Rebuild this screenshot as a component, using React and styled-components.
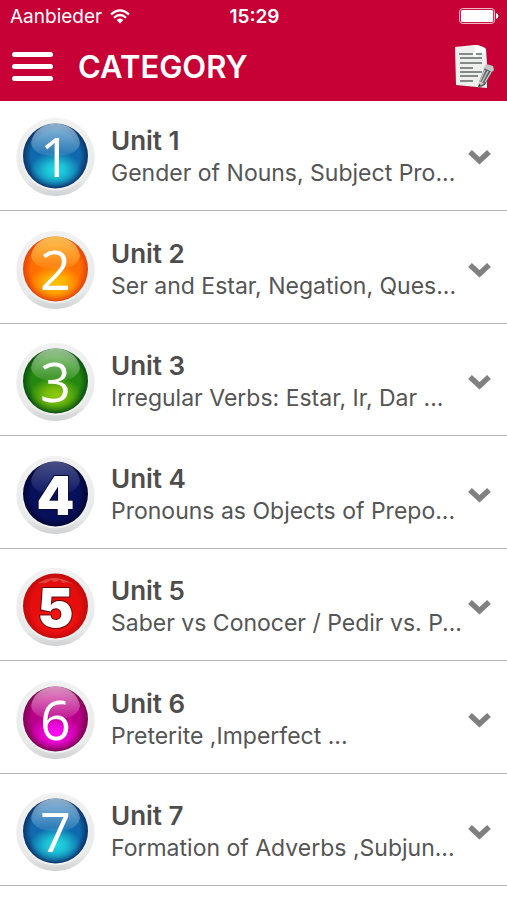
import React from "react";
import styled, { createGlobalStyle } from "styled-components";

const GlobalStyle = createGlobalStyle`
  * {
    box-sizing: border-box;
  }
  body {
    margin: 0;
    background: #fff;
    font-family: Inter, "Liberation Sans", sans-serif;
  }
  button {
    padding: 0;
    border: 0;
    background: none;
    font: inherit;
    cursor: pointer;
  }
  svg {
    display: block;
  }
`;

const Header = styled.header`
  background: #c70036;
  color: #fff;
`;

const StatusBar = styled.div`
  display: grid;
  grid-template-columns: 1fr auto 1fr;
  align-items: center;
  height: 32px;
  padding: 0 8px 0 10px;
  font-size: 19px;
`;

const Carrier = styled.div`
  display: flex;
  align-items: center;
  gap: 8px;
`;

const Clock = styled.time`
  font-weight: 600;
`;

const Battery = styled.div`
  justify-self: end;
`;

const Toolbar = styled.div`
  display: flex;
  align-items: center;
  height: 69px;
  padding: 0 12px;
`;

const MenuButton = styled.button`
  display: flex;
  flex-direction: column;
  gap: 7px;
  width: 41px;
`;

const MenuLine = styled.span`
  height: 5px;
  border-radius: 3px;
  background: #fff;
`;

const Title = styled.h1`
  flex: 1;
  margin: 0 0 0 25px;
  font-size: 31px;
  line-height: 40px;
  font-weight: 600;
`;

const List = styled.ul`
  margin: 0;
  padding: 0;
  list-style: none;
`;

const Item = styled.li`
  height: 112px;
  border-bottom: 1px solid #b4b4b4;
  &:nth-child(even) {
    height: 113px;
  }
  &:first-child {
    height: 110px;
  }
`;

const Row = styled.button`
  display: flex;
  align-items: flex-end;
  width: 100%;
  height: 100%;
  padding: 0 15px 13px 16px;
  text-align: left;
`;

const RowText = styled.span`
  flex: 1;
  min-width: 0;
  margin: 0 0 8px 16px;
`;

const UnitName = styled.span`
  display: block;
  font-size: 26px;
  line-height: 32px;
  font-weight: 600;
  color: #4d4d4d;
`;

const Topics = styled.span`
  display: block;
  overflow: hidden;
  font-size: 23px;
  line-height: 32px;
  color: #555;
  white-space: nowrap;
`;

const ChevronBox = styled.span`
  flex: none;
  margin-bottom: 32px;
`;

const Numeral = styled.text`
  font-family: ${({ $heavy }) =>
    $heavy ? 'Inter, "Liberation Sans", sans-serif' : '"Open Sans", sans-serif'};
  font-size: 54px;
  font-weight: ${({ $heavy }) => ($heavy ? 900 : 400)};
  text-anchor: middle;
  fill: #fff;
  stroke: ${({ $outline }) => $outline || "none"};
  stroke-width: 2px;
  paint-order: stroke;
`;

const blue = { glow: "#20dce2", mid: "#0f69ac", edge: "#0c3268", shine: "#b9d6eb" };

const units = [
  { id: 1, topics: "Gender of Nouns, Subject Pro...", ...blue },
  {
    id: 2,
    topics: "Ser and Estar, Negation, Ques...",
    glow: "#ffc400",
    mid: "#ff6f00",
    edge: "#e2430c",
    shine: "#ffe16b",
  },
  {
    id: 3,
    topics: "Irregular Verbs: Estar, Ir, Dar ...",
    glow: "#91cc0b",
    mid: "#24880f",
    edge: "#0c4f14",
    shine: "#c3e2bb",
  },
  {
    id: 4,
    topics: "Pronouns as Objects of Prepo...",
    glow: "#07105b",
    mid: "#07105b",
    edge: "#020633",
    shine: "#6872a8",
    heavy: true,
    outline: "#050a2c",
  },
  {
    id: 5,
    topics: "Saber vs Conocer / Pedir vs. P...",
    glow: "#f51414",
    mid: "#e60d0d",
    edge: "#c00b0b",
    shine: "#e46a6a",
    heavy: true,
    outline: "#5f0808",
  },
  {
    id: 6,
    topics: "Preterite ,Imperfect ...",
    glow: "#ff08fa",
    mid: "#b80088",
    edge: "#7a0650",
    shine: "#f4bedd",
  },
  { id: 7, topics: "Formation of Adverbs ,Subjun...", ...blue },
];

function Badge({ unit }) {
  const { id, glow, mid, edge, shine, heavy, outline } = unit;
  return (
    <svg width="79" height="79" viewBox="0 0 79 79">
      <defs>
        <linearGradient id={`rim${id}`} x1="0" y1="0" x2="0" y2="1">
          <stop offset="0" stopColor="#f2f2f2" />
          <stop offset="0.8" stopColor="#e8e9e9" />
          <stop offset="1" stopColor="#cfd1d2" />
        </linearGradient>
        <radialGradient id={`ball${id}`} cx="0.5" cy="0.5" r="0.5">
          <stop offset="0.75" stopColor={mid} />
          <stop offset="1" stopColor={edge} />
        </radialGradient>
        <radialGradient id={`glow${id}`}>
          <stop offset="0" stopColor={glow} />
          <stop offset="0.4" stopColor={glow} stopOpacity="0.75" />
          <stop offset="1" stopColor={glow} stopOpacity="0" />
        </radialGradient>
        <linearGradient id={`shine${id}`} x1="0" y1="0" x2="0" y2="1">
          <stop offset="0" stopColor={shine} stopOpacity="0.95" />
          <stop offset="1" stopColor={shine} stopOpacity="0.15" />
        </linearGradient>
      </defs>
      <circle cx="39.5" cy="39" r="39.2" fill={`url(#rim${id})`} />
      <circle cx="39.5" cy="38" r="34.5" fill="#eff0f0" />
      <circle cx="39.5" cy="38" r="32.5" fill={`url(#ball${id})`} />
      <ellipse cx="39.5" cy="52" rx="26" ry="18" fill={`url(#glow${id})`} />
      {id === 5 ? (
        <path
          d="M20 17q18-14 38 0-7-4-11-2l-3-3-5 2-4-2-5 3q-5-1-10 2Z"
          fill={shine}
          opacity="0.6"
        />
      ) : (
        <path
          d="M15 25C19-1 60-1 64 25C62 34 54 38 39.5 38S17 34 15 25Z"
          fill={`url(#shine${id})`}
          opacity={heavy ? 0.7 : 0.8}
        />
      )}
      <Numeral x="39.5" y="59" $heavy={heavy} $outline={outline}>
        {id}
      </Numeral>
    </svg>
  );
}

function WifiIcon() {
  return (
    <svg width="20" height="15" viewBox="0 0 20 15" fill="none" stroke="#fff">
      <path d="M1 5.4Q10-2.6 19 5.4" strokeWidth="2.2" />
      <path d="M4 8.7Q10 3.3 16 8.7" strokeWidth="2.2" />
      <path d="M6.6 11Q10 8 13.4 11L10 14.4Z" fill="#fff" stroke="none" />
    </svg>
  );
}

function BatteryIcon() {
  return (
    <svg width="40" height="16" viewBox="0 0 40 16">
      <rect x="0.6" y="0.6" width="35" height="14.8" rx="3" fill="none" stroke="#fff" opacity="0.8" />
      <rect x="2" y="2" width="32.2" height="12" rx="1.5" fill="#fff" />
      <path d="M37 5q2.5.8 2.5 3T37 11Z" fill="#fff" />
    </svg>
  );
}

function NotesIcon() {
  return (
    <svg width="41" height="46" viewBox="0 0 41 46">
      <path d="M1 4 20 2q7 0 13 6l2 15v22L2 42Z" fill="#9d1738" opacity="0.5" />
      <path d="M1 3 20 1q7 0 12 4l1 15v24L2 41Z" fill="#eef0ed" />
      <path d="M20 1q7 0 12 4v5q-5-4-10 0 0-6-3-9Z" fill="#fff" />
      <path d="m19 11 3-5q2 4 6 3l-6 4Z" fill="#fff" />
      <path
        d="M5 10h14M22 10h6M6 14h22M6 19h22M6 24h13M6 28h22M6 32h18M6 37h13"
        stroke="#626966"
        strokeWidth="1.7"
      />
      <path d="m31 23 8 3-8 15-6 3v-6Z" fill="#5f6262" />
      <path d="m32 20 7 2 1 4-2 2-8-4Z" fill="#c5c8c8" />
      <path d="m31 26-5 11m8-10-6 11m9-10-6 10" stroke="#c8cccc" strokeWidth="1.3" />
      <path d="m25 37 5 2-6 5Z" fill="#d0cbc5" />
      <path d="m25 40 2 1-3 3Z" fill="#252828" />
    </svg>
  );
}

function Chevron() {
  return (
    <svg width="25" height="16" viewBox="0 0 25 16">
      <path d="M3 3 12.5 11.8 22 3" fill="none" stroke="#808080" strokeWidth="5.4" />
    </svg>
  );
}

export default function App() {
  const [selected, setSelected] = React.useState(null);
  return (
    <>
      <GlobalStyle />
      <Header>
        <StatusBar>
          <Carrier>
            Aanbieder
            <WifiIcon />
          </Carrier>
          <Clock>15:29</Clock>
          <Battery>
            <BatteryIcon />
          </Battery>
        </StatusBar>
        <Toolbar>
          <MenuButton type="button" aria-label="Menu">
            <MenuLine />
            <MenuLine />
            <MenuLine />
          </MenuButton>
          <Title>CATEGORY</Title>
          <button type="button" aria-label="Notes">
            <NotesIcon />
          </button>
        </Toolbar>
      </Header>
      <main>
        <List>
          {units.map((unit) => (
            <Item key={unit.id}>
              <Row
                type="button"
                aria-pressed={selected === unit.id}
                onClick={() => setSelected(unit.id)}
              >
                <Badge unit={unit} />
                <RowText>
                  <UnitName>Unit {unit.id}</UnitName>
                  <Topics>{unit.topics}</Topics>
                </RowText>
                <ChevronBox>
                  <Chevron />
                </ChevronBox>
              </Row>
            </Item>
          ))}
        </List>
      </main>
    </>
  );
}
